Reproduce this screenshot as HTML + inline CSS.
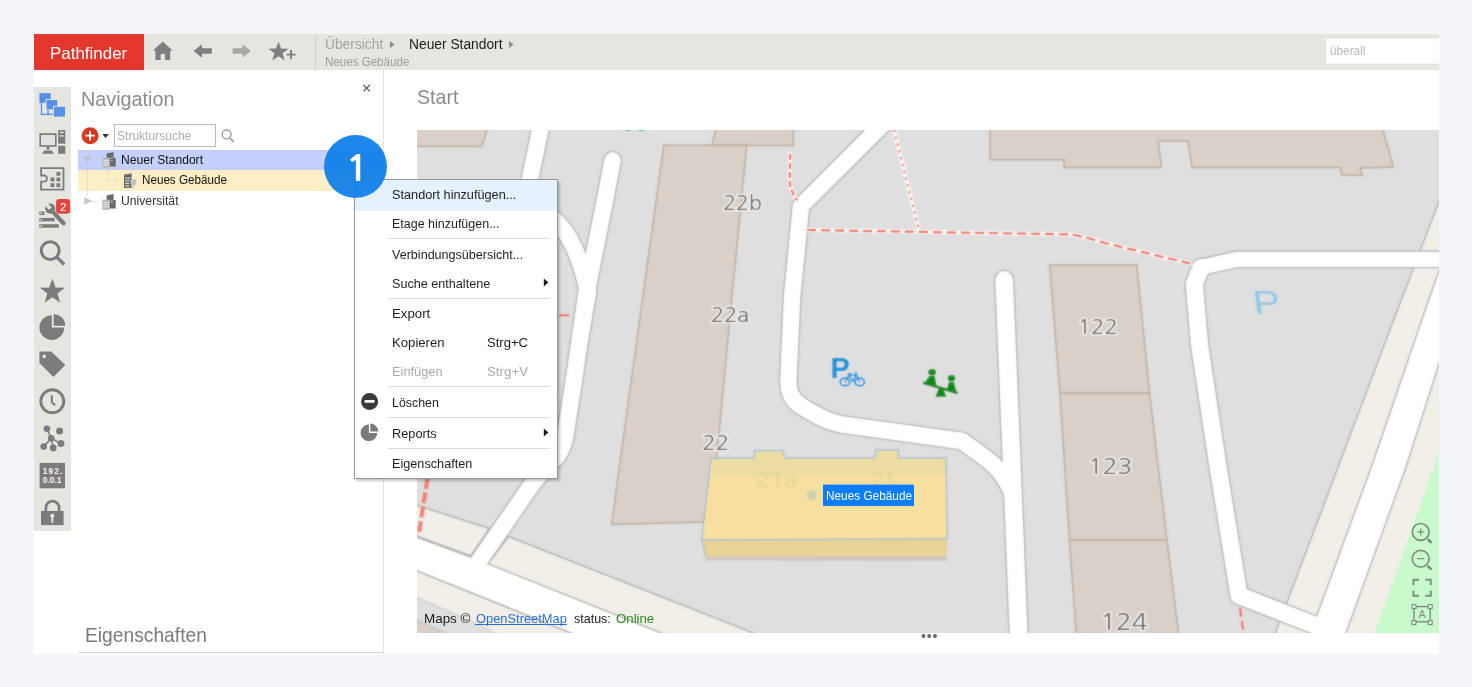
<!DOCTYPE html>
<html lang="de">
<head>
<meta charset="utf-8">
<title>Pathfinder</title>
<style>
*{box-sizing:border-box;margin:0;padding:0}
html,body{width:1472px;height:687px;overflow:hidden}
body{background:#f4f5f9;font-family:"Liberation Sans",sans-serif;color:#222;position:relative}
.abs{position:absolute}
.t{position:absolute;white-space:nowrap;line-height:1;transform-origin:0 0}
#frame{left:34px;top:34px;width:1405px;height:620px;background:#fff}
#toolbar{left:34px;top:34px;width:1405px;height:36px;background:#e6e6e1}
#logo{left:34px;top:34px;width:110px;height:36px;background:#e3362d}
#tbdiv{left:315px;top:34px;width:1px;height:36px;background:#cfcfcb}
#search{left:1326px;top:38px;width:113px;height:25px;background:#fff;transform:translate(0.4px,0.6px)}
#sidebar{left:34px;top:87px;width:37px;height:444px;background:#e6e6e1}
#navborder{left:383px;top:70px;width:1px;height:584px;background:#e3e3e3}
#propline{left:78px;top:652px;width:305px;height:1px;background:#cfd2dc}
.row{left:78px;width:305px;height:20px}
#menu{left:354px;top:179px;width:204px;height:300px;background:#fff;border:1px solid #979797;box-shadow:1.5px 1.5px 3px rgba(0,0,0,.3)}
.sep{position:absolute;left:388px;width:162px;height:1px;background:#dcdcdc}
svg{position:absolute;overflow:visible}
</style>
</head>
<body>
<div id="frame" class="abs"></div>
<div id="toolbar" class="abs"></div>
<div id="logo" class="abs"></div>
<div id="tbdiv" class="abs"></div>
<div id="search" class="abs"></div>
<div id="sidebar" class="abs"></div>
<div id="navborder" class="abs"></div>
<div id="propline" class="abs"></div>
<div class="abs" style="left:114px;top:124px;width:102px;height:23px;border:1px solid #b9b9b9;background:#fff"></div>
<div class="abs row" style="top:150px;background:#c5cffb"></div>
<div class="abs row" style="top:170px;height:21px;background:#fdeec5"></div>
<svg id="map" style="left:417px;top:130px;overflow:hidden" width="1022" height="503" viewBox="417 130 1022 503">
<defs>
<filter id="bl" x="-5%" y="-5%" width="110%" height="110%"><feGaussianBlur stdDeviation="0.8"/></filter>
<filter id="bl2" x="-5%" y="-20%" width="110%" height="140%"><feGaussianBlur stdDeviation="0.5"/></filter>
<g id="mc">
<rect x="407" y="120" width="1042" height="523" fill="#dfdfdf"/>
<!-- beige (land) areas -->
<g fill="#f2efe9" stroke="#b2b2b2" stroke-width="1.4">
<polygon points="1445,186 1402,298 1337.7,468 1272,642 1460,642 1460,186"/>
<polygon points="410,503 489.5,528.5 470.7,556 410,533.5"/>
<polygon points="508.6,536.5 756,634 760,645 660,645 488,563.8"/>
<polygon points="410,568 569.6,632.5 600,645 410,645"/>
</g>
<polygon points="410,594.5 471.7,621.3 520,645 410,645" fill="#dfdfdf" stroke="#c6c6c6" stroke-width="1"/>
<polygon points="410,617.3 445,632.8 450,640 410,640" fill="#d9d0c9" stroke="#c4b5a8" stroke-width="1"/>
<!-- park -->
<polygon points="1445,436 1374.8,633 1372,645 1460,645" fill="#c8facc"/>
<!-- buildings -->
<g fill="#d9d0c9" stroke="#bfac9d" stroke-width="1.5">
<polygon points="410,120 490,120 481.8,146.6 410,146.6"/>
<polygon points="718,120 793.4,120 793.4,145.6 712,145.6"/>
<polygon points="663.8,145.3 746.7,145.3 731.8,298 715.7,468 703.4,522 611.8,524.4 619.2,468 642.7,298"/>
<polygon points="990.2,120 1380,120 1393.4,167.1 1360,168.3 1362.4,175.5 1342,175 1340.1,167.6 1192.1,167.6 1187.9,140.9 1158.2,140.9 1161.4,167.6 1064,167.6 1064,159.7 990.2,159.7"/>
<polygon points="1049.6,264.9 1136.7,264.9 1149.6,393.2 1060,393.2"/>
<polygon points="1060,393.2 1149.6,393.2 1166.9,539.8 1069.4,539.8"/>
<polygon points="1069.4,539.8 1166.9,539.8 1180,645 1077,645"/>
</g>
<!-- road casings -->
<g fill="none" stroke="#b4b4b4" stroke-linecap="round" stroke-linejoin="round">
<path d="M542.3,120 L521.3,220" stroke-width="19.4"/>
<path d="M535,209 C560,216 578,244 588,292 L580,338" stroke-width="19.4"/>
<path d="M612.5,160.5 L605,200 L587,290 L575,373 L565,438 Q562,452 552,462 L535,480 L479,561 L470,574" stroke-width="19.4"/>
<path d="M887,120 L801,206 L792,298 L788.4,380 C788,398 797,404 806,409 C820,417 826,421 842,424.5 L962,441 L986,458.5 Q1001,469 1010.5,489" stroke-width="19.4"/>
<path d="M1004.2,280 L1019.3,650" stroke-width="20.6"/>
<path d="M1450,259.3 L1237,259.3 L1201,267.3" stroke-width="18"/><path d="M1201,267.6 L1194.3,284 L1199.6,345 L1218.2,468 L1239,595.5 L1335,633" stroke-width="20"/>
</g>
<polygon points="1445,254 1429.3,298 1371,468 1316.6,616 1306,645 1342,645 1346.3,632 1405.7,468 1445,345" fill="#fff" stroke="#b2b2b2" stroke-width="1.4"/>
<polygon points="410,534.7 470.8,557 488,563.8 645,626.5 690,645 600,645 569.6,632.5 410,567.9" fill="#fff" stroke="#b4b4b4" stroke-width="1.4"/>
<!-- road fills -->
<g fill="none" stroke="#fff" stroke-linecap="round" stroke-linejoin="round">
<path d="M542.3,120 L521.3,220" stroke-width="16.6"/>
<path d="M535,209 C560,216 578,244 588,292 L580,338" stroke-width="16.6"/>
<path d="M612.5,160.5 L605,200 L587,290 L575,373 L565,438 Q562,452 552,462 L535,480 L479,561 L470,574" stroke-width="16.6"/>
<path d="M887,120 L801,206 L792,298 L788.4,380 C788,398 797,404 806,409 C820,417 826,421 842,424.5 L962,441 L986,458.5 Q1001,469 1010.5,489" stroke-width="16.6"/>
<path d="M1004.2,280 L1019.3,650" stroke-width="17.8"/>
<path d="M1450,259.3 L1237,259.3 L1201,267.3" stroke-width="15.2"/><path d="M1201,267.6 L1194.3,284 L1199.6,345 L1218.2,468 L1239,595.5 L1335,633" stroke-width="17.2"/>
</g>
<!-- footpaths -->
<g fill="none" stroke="#f8f4f2" stroke-width="4.4" stroke-linecap="round">
<path d="M790.2,154 L789.7,182.5 Q791,192 797,200"/>
<path d="M894,130 L918.4,228"/>
<path d="M807,230 L1069.4,234.4 Q1078,235 1105,243 L1190.4,263.6"/>
</g>
<g fill="none" stroke="#f26a5c" stroke-width="2.1">
<path d="M790.2,154 L789.7,182.5 Q791,192 797,200" stroke-dasharray="6 3"/>
<path d="M894,130 L918.4,228" stroke-dasharray="2 5"/>
<path d="M807,230 L1069.4,234.4 Q1078,235 1105,243 L1190.4,263.6" stroke-dasharray="9 5"/>
<path d="M559.5,315.3 L569,315.3"/>
<path d="M427.6,478 L418.5,535.5" stroke="#f58074" stroke-width="4.3" stroke-dasharray="11 3.5"/>
<path d="M1240,607.9 L1243.6,634" stroke-width="2" stroke-dasharray="9 4"/>
</g>
<!-- labels -->
<g font-family="NanumGothic, DejaVu Sans, sans-serif" fill="#575757" stroke="#f3efec" stroke-width="3.2" stroke-linejoin="round" paint-order="stroke" font-size="19">
<text x="723.2" y="210.4" textLength="38.6" lengthAdjust="spacingAndGlyphs">22b</text>
<text x="711" y="322.1" textLength="38.2" lengthAdjust="spacingAndGlyphs">22a</text>
<text x="702.2" y="449.6" textLength="27.2" lengthAdjust="spacingAndGlyphs">22</text>
<text x="1077.6" y="334.3" textLength="40.4" lengthAdjust="spacingAndGlyphs">122</text>
<text x="1088" y="474" font-size="22" textLength="44.4" lengthAdjust="spacingAndGlyphs">123</text>
<text x="1100.2" y="629.6" font-size="24" textLength="47.4" lengthAdjust="spacingAndGlyphs">124</text>
</g>
<!-- POIs -->
<text x="0" y="0" transform="translate(1254.6 314) skewX(8)" font-family="Liberation Sans, sans-serif" font-size="33.5" fill="#93c8e6" textLength="27.5" lengthAdjust="spacingAndGlyphs">P</text>
<text x="830.4" y="377.6" font-family="Liberation Sans, sans-serif" font-weight="bold" font-size="29" fill="#0f94dc">P</text>
<g fill="none" stroke="#1a98de" stroke-width="1.7">
<ellipse cx="845" cy="381.9" rx="4.7" ry="3.7"/><ellipse cx="859.7" cy="381.9" rx="4.7" ry="3.7"/>
<path d="M845,381.9 L849.3,375 L856.5,374.6 L859.7,381.9 M849.3,375 L852.6,381.5 L856.5,374.6 L855.4,371.6 M847.5,373.6 H851" stroke-width="1.3"/>
<path d="M623.4,125.4 a4.6,4.6 0 1 0 9.2,0 M636.2,125.4 a4.6,4.6 0 1 0 9.2,0"/>
</g>
<g fill="#0e8a16">
<ellipse cx="932.1" cy="372.2" rx="3.8" ry="3.2"/>
<path d="M929.4,376 H934.6 L936.4,385.6 L924.6,382.6 Z"/>
<ellipse cx="951.5" cy="378.3" rx="3.6" ry="3.2"/>
<path d="M948.9,382.3 H954 L956.6,392.6 L946.8,389.8 Z"/>
<path d="M923.4,381.6 L958,391.8 L957.4,394.2 L922.8,384 Z"/>
<path d="M939,388 H942.8 L946.2,396.8 H935.4 Z"/>
</g>
<!-- 3D building -->
<path d="M705.2,556.4 L946.6,556.4 L946.6,560.8 L705.6,560.4 Z" fill="#d2c4ba"/>
<path d="M701.6,539.8 L947.5,538.7 L946.5,556.3 L705.8,556.3 Z" fill="#e8d397"/>
<path d="M711.1,458.1 H754.4 V450.5 H782.9 L785,458 H875.3 V450 H898.6 V458 H946 L947.5,538.7 L701.6,539.8 Z" fill="#f7e09f"/>
<path d="M711.1,458.1 H754.4 V450.5 H782.9 L785,458 H875.3 V450 H898.6 V458 H946 L946.3,476 H899.6 L899,458 V476 H876 L875.3,458 V476 H788 L783,458 L787,476 H758 L754.4,458 L757,476 H712.4 Z" fill="#ecdda2"/>
<g fill="none" stroke="#8db6e2" stroke-width="1">
<path d="M711.1,458.1 H754.4 V450.5 H782.9 L785,458 H875.3 V450 H898.6 V458 H946 L947.5,538.7 L701.6,539.8 Z"/>
<path d="M701.6,539.8 L705.8,556.3"/>
</g>
<g font-family="NanumGothic, DejaVu Sans, sans-serif" fill="#e3d39c" font-size="19">
<text x="755.6" y="487.2" textLength="42" lengthAdjust="spacingAndGlyphs">21a</text>
<text x="872.8" y="486.6" textLength="23" lengthAdjust="spacingAndGlyphs">21</text>
</g>
<circle cx="811.5" cy="495.2" r="6.6" fill="#efe0a8"/>
<circle cx="811.5" cy="495.2" r="4.7" fill="#cdd0a8"/>
</g>
</defs>
<use href="#mc" filter="url(#bl)"/>
<use href="#mc" opacity="0.45"/>
<rect x="823" y="484.6" width="91" height="21.4" fill="#0a7cff"/>
<!-- map controls -->
<g fill="none" stroke="#7f8c80" stroke-width="1.7">
<circle cx="1420.7" cy="531.9" r="8.4"/><circle cx="1420.7" cy="558.7" r="8.4"/>
<path d="M1417.2,531.9 H1424.2 M1420.7,528.4 V535.4 M1417.2,558.7 H1424.2" stroke-width="1.2"/>
<path d="M1427.6,539.2 L1431.6,542.8 M1427.6,566 L1431.6,569.6" stroke-width="2.6"/>
<path d="M1413.4,585 V579.7 H1419 M1425.4,579.7 H1430.8 V585 M1430.8,590.6 V595.8 H1425.4 M1419,595.8 H1413.4 V590.6" stroke-width="1.9"/>
<rect x="1414" y="606.6" width="16.2" height="15.2" stroke-width="1.4"/>
<g fill="#d8f3da" stroke-width="1.1"><rect x="1412" y="604.6" width="4" height="4"/><rect x="1428.2" y="604.6" width="4" height="4"/><rect x="1412" y="620.6" width="4" height="4"/><rect x="1428.2" y="620.6" width="4" height="4"/></g>
</g>
<text x="1422.1" y="618.4" font-family="Liberation Sans, sans-serif" font-size="10.5" fill="#7f8c80" text-anchor="middle">A</text>
</svg>

<!-- toolbar icons -->
<svg style="left:150px;top:38px" width="150" height="28" viewBox="150 38 150 28">
<g fill="#7f7f7f">
<path d="M162.8,41.4 L172.6,50.6 H170.2 V59.9 H164.9 V54 H160.7 V59.9 H155.4 V50.6 H153 Z"/>
<path d="M193.6,51 L202,44.2 V48.2 H211.8 V53.8 H202 V57.8 Z"/>
<path d="M278.5,41.5 L281.0,48.5 L288.5,48.8 L282.6,53.3 L284.7,60.5 L278.5,56.3 L272.3,60.5 L274.4,53.3 L268.5,48.8 L276.0,48.5 Z"/>
<path d="M290.05,50 H291.95 V53.65 H295.6 V55.55 H291.95 V59.2 H290.05 V55.55 H286.4 V53.65 H290.05 Z" stroke="#e6e6e1" stroke-width="1" paint-order="stroke"/>
</g>
<path d="M250.9,51 L242.5,44.2 V48.2 H232.7 V53.8 H242.5 V57.8 Z" fill="#a7a7a5"/>
</svg>
<!-- breadcrumb arrows -->
<svg style="left:385px;top:40px" width="135" height="12" viewBox="385 40 135 12">
<path d="M390,41 L394.6,44.6 L390,48.2 Z M509,41 L513.6,44.6 L509,48.2 Z" fill="#8d8d8d"/>
</svg>
<!-- nav close x -->
<svg style="left:360px;top:82px" width="14" height="14" viewBox="360 82 14 14">
<path d="M363.4,84.9 L369.9,91.4 M369.9,84.9 L363.4,91.4" stroke="#555" stroke-width="1.3" fill="none"/>
</svg>
<!-- sidebar icons -->
<svg style="left:34px;top:87px" width="37" height="444" viewBox="34 87 37 444">
<!-- structure -->
<g fill="#5590ea">
<rect x="39.4" y="93.1" width="11.3" height="9.6"/>
<rect x="40.8" y="102" width="1.3" height="13"/>
<rect x="40.8" y="113.7" width="14" height="1.3"/>
<rect x="47.4" y="108" width="1.3" height="6.5"/>
<rect x="45.6" y="99.1" width="12.4" height="11" fill="#e6e6e1"/>
<rect x="46.5" y="100" width="10.7" height="9.4"/>
<rect x="53" y="105.9" width="12.8" height="11" fill="#e6e6e1"/>
<rect x="53.9" y="106.8" width="11.1" height="9.8"/>
</g>
<!-- monitor + tower -->
<g fill="#7c7c7c">
<path d="M39.4,133.3 H56.6 V146.8 H39.4 Z M41.1,135 V145.1 H54.9 V135 Z" fill-rule="evenodd"/>
<rect x="46.4" y="146.8" width="3.2" height="2.8"/>
<path d="M44,150.4 H52 L53.8,153.7 H42.2 Z"/>
<rect x="58.2" y="130.1" width="7.1" height="13.6"/>
<rect x="58.2" y="145.7" width="7.1" height="8.1"/>
</g>
<rect x="41.1" y="135" width="13.8" height="10.1" fill="#e2e2de"/>
<rect x="59.8" y="131.7" width="3.9" height="1.4" fill="#e6e6e1"/>
<rect x="59.8" y="135.2" width="3.9" height="1.4" fill="#e6e6e1"/>
<!-- floor plan -->
<path d="M41.1,168.1 H63.5 V189.7 H41.1 V181.6 H44.6 Q46.9,181.2 46.9,178.5 Q46.9,175.8 44.6,175.5 H41.1 Z" fill="none" stroke="#7c7c7c" stroke-width="1.8"/>
<g fill="#7c7c7c">
<rect x="56.4" y="171.9" width="3.9" height="3.9"/>
<rect x="50.5" y="177.5" width="3.9" height="3.9"/><rect x="56.4" y="177.5" width="3.9" height="3.9"/>
<rect x="50.5" y="183.2" width="3.9" height="3.9"/><rect x="56.4" y="183.2" width="3.9" height="3.9"/>
</g>
<!-- tools -->
<g fill="#7c7c7c">
<rect x="39.3" y="211.5" width="5.2" height="3.5"/>
<rect x="39.3" y="217.9" width="15.4" height="3.5"/>
<rect x="39.3" y="224.2" width="19.5" height="3.5"/>
<circle cx="50.3" cy="208.7" r="5.1"/>
<path d="M52.2,208.2 L65.4,222 Q66.4,223.6 65,225 Q63.6,226.2 62.2,225 L49.6,211.2 Z"/>
</g>
<rect x="44" y="202.2" width="3.6" height="6.4" fill="#e6e6e1" transform="rotate(-42 50.3 208.7) translate(4.5 0)"/>
<g fill="#e6e6e1"><rect x="40.4" y="212.5" width="1.5" height="1.5"/><rect x="40.4" y="218.9" width="1.5" height="1.5"/><rect x="40.4" y="225.2" width="1.5" height="1.5"/></g>
<rect x="56.1" y="198.9" width="14" height="14.9" rx="3.2" fill="#e8423e"/>
<text x="63.1" y="210.6" font-family="Liberation Sans, sans-serif" font-size="11.5" fill="#fff" text-anchor="middle">2</text>
<!-- search -->
<circle cx="50.2" cy="250.6" r="8.9" fill="none" stroke="#7c7c7c" stroke-width="3"/>
<path d="M57,257.4 L64.2,264.5" stroke="#7c7c7c" stroke-width="3.3" fill="none"/>
<!-- star -->
<polygon points="52.4,278.6 55.6,287.5 65.0,287.8 57.5,293.6 60.2,302.7 52.4,297.3 44.6,302.7 47.3,293.6 39.8,287.8 49.2,287.5" fill="#7c7c7c"/>
<!-- pie -->
<path d="M51.8,315.2 A12.4,12.4 0 1 0 64.2,327.6 H51.8 Z" fill="#7c7c7c"/>
<path d="M53.7,314.2 A11.6,11.6 0 0 1 65.3,325.8 H53.7 Z" fill="#7c7c7c"/>
<!-- tag -->
<path d="M39.4,351.6 H51.2 L65.3,365 L53.4,377.1 L39.4,362.9 Z M44.2,354.6 a1.8,1.8 0 1 0 0.01,0 Z" fill="#7c7c7c" fill-rule="evenodd"/>
<!-- clock -->
<circle cx="52.3" cy="401.3" r="11.5" fill="none" stroke="#7c7c7c" stroke-width="2.9"/>
<path d="M51.8,395.2 V402.3 L55.2,405.2" fill="none" stroke="#7c7c7c" stroke-width="2.1"/>
<!-- network -->
<g stroke="#7c7c7c" stroke-width="1.6" fill="none"><path d="M51.2,438.2 L46.9,428.8 M51.2,438.2 L60.9,443.6 M51.2,438.2 L53.2,447.9 M51.2,438.2 L43.7,446.6"/></g>
<g fill="#7c7c7c"><circle cx="51.2" cy="438.2" r="3.3"/><circle cx="46.9" cy="428.8" r="3.3"/><circle cx="59.6" cy="431" r="3.5"/><circle cx="60.9" cy="443.6" r="3.5"/><circle cx="53.2" cy="447.9" r="3.4"/><circle cx="43.7" cy="446.6" r="3.3"/></g>
<!-- ip -->
<rect x="39.6" y="462.9" width="25.4" height="25.4" fill="#7c7c7c"/>
<text x="42.7" y="473.7" font-family="Liberation Sans, sans-serif" font-size="8.2" font-weight="bold" fill="#f4f4f2" textLength="19.6" lengthAdjust="spacing">192.</text>
<text x="42.7" y="483.4" font-family="Liberation Sans, sans-serif" font-size="8.2" font-weight="bold" fill="#f4f4f2" textLength="18.9" lengthAdjust="spacing">0.0.1</text>
<!-- lock -->
<rect x="41" y="510.9" width="22.6" height="14.2" fill="#7c7c7c"/>
<path d="M45.95,511.5 V507.6 A6.55,6.55 0 0 1 59.05,507.6 V511.5" fill="none" stroke="#7c7c7c" stroke-width="2.7"/>
<circle cx="52.3" cy="515.7" r="2" fill="#eeeeea"/><rect x="51.4" y="516" width="1.8" height="6.7" fill="#eeeeea"/>
</svg>
<!-- nav tools -->
<svg style="left:78px;top:120px" width="310" height="95" viewBox="78 120 310 95">
<circle cx="90.1" cy="135.7" r="8.5" fill="#d9381e"/>
<path d="M85.3,135.7 H94.9 M90.1,130.9 V140.5" stroke="#fff" stroke-width="1.8" fill="none"/>
<path d="M102.3,134.1 H108.9 L105.6,137.9 Z" fill="#333"/>
<circle cx="226.6" cy="134.4" r="4.4" fill="none" stroke="#9f9f9f" stroke-width="1.4"/>
<path d="M229.8,137.8 L233.8,141.8" stroke="#9f9f9f" stroke-width="1.7" fill="none"/>
<!-- dotted tree lines -->
<g stroke="#cdcdcd" stroke-width="1" stroke-dasharray="1 1" fill="none">
<path d="M87.5,163 V197"/><path d="M92,159.5 H99"/><path d="M93,201.5 H99"/>
<path d="M107.5,170 V180.5 H119"/>
</g>
<path d="M83.5,156.2 H90.9 L87.2,162.5 Z" fill="#bcbec8"/>
<path d="M84.3,197.3 L92.4,200.9 L84.3,204.5 Z" fill="#c6c6c6"/>
<!-- site icons -->
<g id="site">
<path d="M106.6,153.6 L113.6,152 V158 H115.7 V166.5 H106.6 Z" fill="#6a6a6a"/>
<rect x="102.3" y="157.6" width="7.6" height="10.3" fill="#b9b9b9"/>
<path d="M103.3,160.5 H108.9 M103.3,162.7 H108.9 M103.3,164.9 H108.9" stroke="#ececec" stroke-width="0.9"/>
<path d="M110.8,158.4 H112.6 M110.8,160.6 H112.6" stroke="#d0d0d0" stroke-width="0.9"/>
</g>
<use href="#site" y="42"/>
<!-- building icon -->
<path d="M124,174.8 L131.6,173.3 V188 H124 Z" fill="#6a6a6a"/>
<path d="M125.2,178.2 H130.4 M125.2,180.8 H129.4 M125.2,183.4 H129 M125.2,186 H129.4" stroke="#eee" stroke-width="1"/>
<circle cx="133.4" cy="182.2" r="3.1" fill="#c3c3c3"/>
<rect x="132.9" y="184.5" width="1" height="4" fill="#c3c3c3"/>
</svg>

<div id="menu" class="abs"></div>
<div class="abs" style="left:355px;top:180px;width:202px;height:31px;background:#e5f1fb"></div>
<div class="sep" style="top:238px"></div>
<div class="sep" style="top:298px"></div>
<div class="sep" style="top:386px"></div>
<div class="sep" style="top:417px"></div>
<div class="sep" style="top:448px"></div>
<svg style="left:356px;top:270px" width="200" height="180" viewBox="356 270 200 180">
<path d="M543.8,278.6 L548.4,282.6 L543.8,286.6 Z M543.8,428.6 L548.4,432.6 L543.8,436.6 Z" fill="#1a1a1a"/>
<circle cx="369.6" cy="401.4" r="8.5" fill="#3a3a3a"/>
<rect x="364.6" y="400.1" width="10" height="2.6" rx="0.6" fill="#fff"/>
<path d="M368.9,424.6 A8.3,8.3 0 1 0 377.2,432.9 H368.9 Z" fill="#7a7a7a"/>
<path d="M370.3,423.6 A7.9,7.9 0 0 1 378.2,431.5 H370.3 Z" fill="#7a7a7a"/>
</svg>

<div class="abs" id="badge" style="left:324px;top:134.7px;width:62.9px;height:62.9px;border-radius:50%;background:rgba(14,126,233,.93)"></div>
<div class="abs" style="left:475px;top:623.6px;width:91.5px;height:1px;background:#2a6fd6"></div>
<div class="t" id="logotxt" style="left:50.2px;top:45.23px;font-size:16.5px;color:#fff;transform:scaleX(1.0265);">Pathfinder</div>
<div class="t" id="srchtxt" style="left:1329.8px;top:44.84px;font-size:12px;color:#b9b9b9;transform:scaleX(0.9803);">überall</div>
<div class="t" id="bc1" style="left:325.2px;top:36.55px;font-size:14px;color:#a2a2a2;transform:scaleX(0.9848);">Übersicht</div>
<div class="t" id="bc2" style="left:408.9px;top:36.55px;font-size:14px;color:#1c1c1c;transform:scaleX(0.9851);">Neuer Standort</div>
<div class="t" id="bc3" style="left:325.3px;top:56.14px;font-size:12px;color:#9c9c9c;transform:scaleX(0.9647);">Neues Gebäude</div>
<div class="t" id="navtitle" style="left:80.8px;top:89.05px;font-size:20.5px;color:#8b8b8b;transform:scaleX(0.9647);">Navigation</div>
<div class="t" id="starttitle" style="left:417.0px;top:86.42px;font-size:21px;color:#8b8b8b;transform:scaleX(0.9335);">Start</div>
<div class="t" id="proptitle" style="left:84.5px;top:624.42px;font-size:21px;color:#7b7b7b;transform:scaleX(0.9159);">Eigenschaften</div>
<div class="t" id="strsuche" style="left:116.8px;top:129.84px;font-size:12px;color:#adadad;transform:scaleX(1.0037);">Struktursuche</div>
<div class="t" id="tr1" style="left:120.7px;top:153.84px;font-size:12px;color:#111;transform:scaleX(1.0077);">Neuer Standort</div>
<div class="t" id="tr2" style="left:141.7px;top:174.04px;font-size:12px;color:#111;transform:scaleX(0.9716);">Neues Gebäude</div>
<div class="t" id="tr3" style="left:120.7px;top:195.24px;font-size:12px;color:#333;transform:scaleX(1.0147);">Universität</div>
<div class="t" id="mp1" style="left:423.6px;top:611.90px;font-size:13px;color:#1a1a1a;transform:scaleX(1.0321);">Maps ©</div>
<div class="t" id="mp2" style="left:476.0px;top:611.90px;font-size:13px;color:#2a6fd6;transform:scaleX(0.9896);">OpenStreetMap</div>
<div class="t" id="mp3" style="left:573.6px;top:611.90px;font-size:13px;color:#1a1a1a;transform:scaleX(0.9617);">status:</div>
<div class="t" id="mp4" style="left:615.8px;top:611.90px;font-size:13px;color:#2d8a1e;transform:scaleX(1.0173);">Online</div>
<div class="t" id="m1" style="left:391.6px;top:188.40px;font-size:13px;color:#1f1f1f;transform:scaleX(0.9774);">Standort hinzufügen...</div>
<div class="t" id="m2" style="left:391.6px;top:217.10px;font-size:13px;color:#1f1f1f;transform:scaleX(0.9598);">Etage hinzufügen...</div>
<div class="t" id="m3" style="left:391.6px;top:247.80px;font-size:13px;color:#1f1f1f;transform:scaleX(0.9666);">Verbindungsübersicht...</div>
<div class="t" id="m4" style="left:391.6px;top:276.50px;font-size:13px;color:#1f1f1f;transform:scaleX(0.9706);">Suche enthaltene</div>
<div class="t" id="m5" style="left:391.6px;top:307.20px;font-size:13px;color:#1f1f1f;transform:scaleX(1.0173);">Export</div>
<div class="t" id="m6" style="left:391.6px;top:336.10px;font-size:13px;color:#1f1f1f;transform:scaleX(1.0112);">Kopieren</div>
<div class="t" id="m6b" style="left:487.0px;top:336.10px;font-size:13px;color:#1f1f1f;transform:scaleX(1.0049);">Strg+C</div>
<div class="t" id="m7" style="left:391.6px;top:364.50px;font-size:13px;color:#a9a9a9;transform:scaleX(0.9845);">Einfügen</div>
<div class="t" id="m7b" style="left:487.0px;top:364.50px;font-size:13px;color:#a9a9a9;transform:scaleX(1.0230);">Strg+V</div>
<div class="t" id="m8" style="left:391.6px;top:395.50px;font-size:13px;color:#1f1f1f;transform:scaleX(0.9527);">Löschen</div>
<div class="t" id="m9" style="left:391.6px;top:426.50px;font-size:13px;color:#1f1f1f;transform:scaleX(0.9824);">Reports</div>
<div class="t" id="m10" style="left:391.6px;top:456.50px;font-size:13px;color:#1f1f1f;transform:scaleX(0.9748);">Eigenschaften</div>
<div class="t" id="badge1" style="left:344.5px;top:150.95px;font-size:35.5px;color:#fff;transform:scaleX(1.1300);font-family:NanumGothic,'Liberation Sans',sans-serif;font-weight:700">1</div>
<div class="t" id="dots" style="left:920.9px;top:629.05px;font-size:14px;color:#6a6a6a;transform:scaleX(1.0000);letter-spacing:0.9px">•••</div>
<div class="t" id="maplabel" style="left:825.6px;top:489.00px;font-size:13px;color:#fff;transform:scaleX(0.9086);">Neues Gebäude</div>
</body>
</html>
